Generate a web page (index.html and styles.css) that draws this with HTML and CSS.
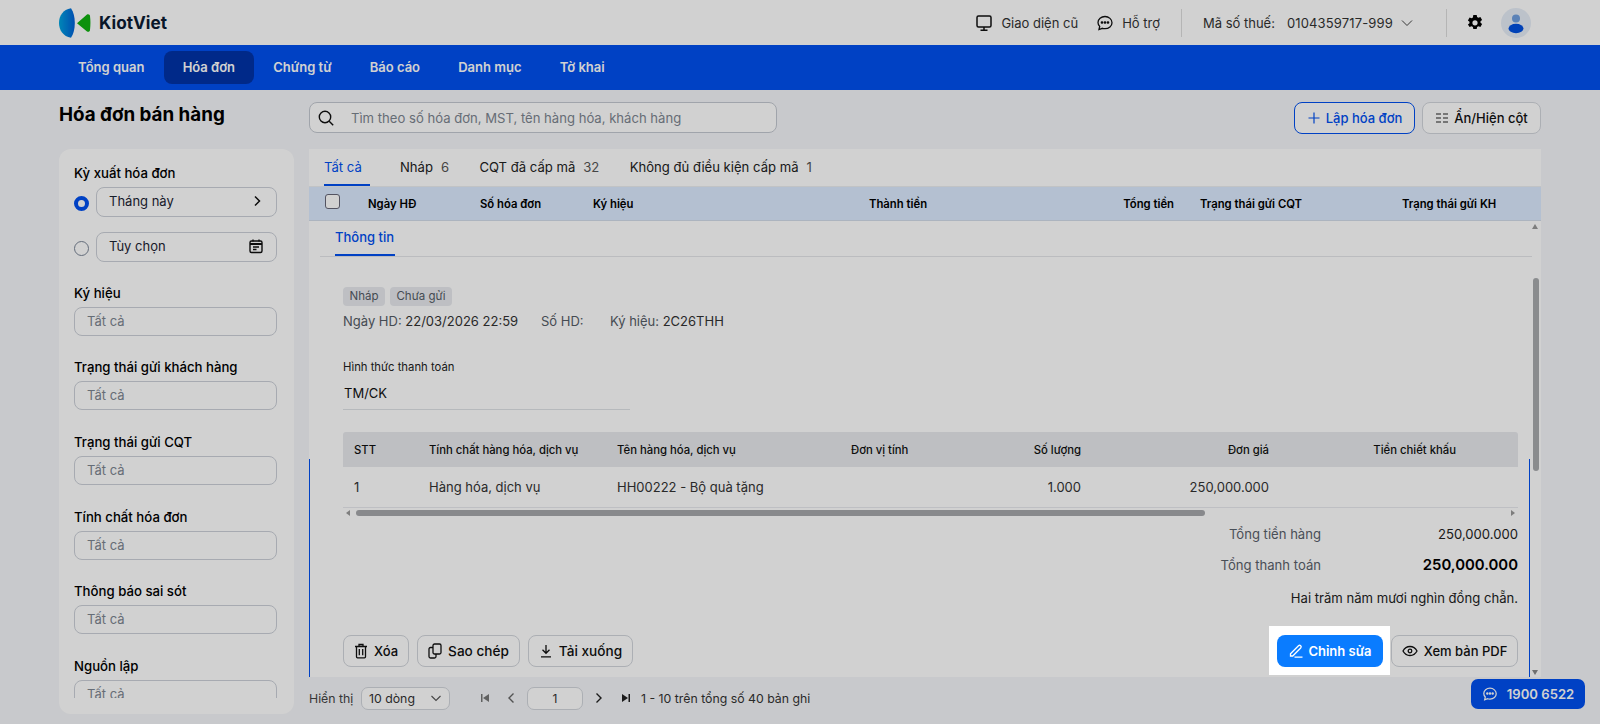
FILE: index.html
```html
<!DOCTYPE html>
<html lang="vi">
<head>
<meta charset="utf-8">
<title>Hóa đơn bán hàng</title>
<link rel="stylesheet" href="styles.css">
</head>
<body>
<header class="topbar">
  <div class="logo">
    <svg width="32" height="30" viewBox="0 0 32 30"><defs><linearGradient id="lg" x1="0" y1="0" x2="1" y2="0"><stop offset="0" stop-color="#00a4e0"/><stop offset="1" stop-color="#0060d8"/></linearGradient></defs><path d="M12 0.300C4 1.500 0 8 0 15s4 13.500 12 14.700C14.500 26 15.800 21 15.800 15S14.500 4 12 0.300Z" fill="url(#lg)"/><path d="M18 15.300L28 6.500c1.500-.8 3 .2 3 1.500 .6 4.500 .6 9 0 14 0 1.500-1.500 2.300-3 1.500L18 15.300Z" fill="#0fb10f"/></svg>
    <span class="logo-text">KiotViet</span>
  </div>
  <div class="top-right">
    <span class="top-link"><svg width="18" height="18" viewBox="0 0 18 18" fill="none" stroke="#111" stroke-width="1.500"><rect x="2" y="2" width="14" height="11" rx="1.500"/><path d="M9 13v3M5.500 16.200h7"/></svg>Giao diện cũ</span>
    <span class="top-link"><svg width="18" height="18" viewBox="0 0 18 18" fill="none" stroke="#111" stroke-width="1.300"><path d="M9 2.500c-3.900 0-7 2.700-7 6 0 1.500.6 2.800 1.700 3.900L3 15.500l3.400-1.200c.8.300 1.700.4 2.600.4 3.900 0 7-2.700 7-6s-3.100-6.200-7-6.200Z"/><circle cx="6" cy="8.500" r=".7" fill="#111"/><circle cx="9" cy="8.500" r=".7" fill="#111"/><circle cx="12" cy="8.500" r=".7" fill="#111"/></svg>Hỗ trợ</span>
    <span class="vsep"></span>
    <span class="tax"><span class="tax-label">Mã số thuế:</span><span class="tax-no">0104359717-999</span><svg width="14" height="14" viewBox="0 0 14 14" fill="none" stroke="#444" stroke-width="1"><path d="M2 4.500l5 5 5-5"/></svg></span>
    <span class="vsep vsep-right"></span>
    <svg class="gear" width="16" height="16" viewBox="0 0 16 16"><path fill="#000" fill-rule="evenodd" d="M6.300 0h3.400l.4 2.100 1.300.7 2-.8 1.700 2.900-1.600 1.400v1.400l1.600 1.400-1.700 2.900-2-.8-1.300.8-.4 2.100H6.300l-.4-2.100-1.300-.8-2 .8L.9 9.600l1.600-1.400V6.800L.9 5.400 2.600 2.500l2 .8 1.300-.7L6.300 0Zm1.700 5.200a2.600 2.600 0 1 0 0 5.200 2.600 2.600 0 0 0 0-5.200Z"/></svg>
    <span class="avatar"><svg width="30" height="30" viewBox="0 0 30 30"><circle cx="15" cy="10.500" r="4" fill="#6f9fe0"/><ellipse cx="15" cy="20.500" rx="7.500" ry="4.700" fill="#0050e0"/></svg></span>
  </div>
</header>
<nav class="mainnav">
  <a class="nav-item">Tổng quan</a>
  <a class="nav-item active">Hóa đơn</a>
  <a class="nav-item">Chứng từ</a>
  <a class="nav-item">Báo cáo</a>
  <a class="nav-item">Danh mục</a>
  <a class="nav-item">Tờ khai</a>
</nav>
<div class="page">
  <aside class="side">
    <h1 class="title">Hóa đơn bán hàng</h1>
    <div class="filters">
      <div class="filters-inner">
        <div class="f-label first">Kỳ xuất hóa đơn</div>
        <div class="radio-row">
          <span class="radio on"></span>
          <span class="field dark">Tháng này<svg width="14" height="14" viewBox="0 0 14 14" fill="none" stroke="#111" stroke-width="1.500"><path d="M5 2.500l4.500 4.500L5 11.500"/></svg></span>
        </div>
        <div class="radio-row second">
          <span class="radio"></span>
          <span class="field dark">Tùy chọn<svg width="16" height="16" viewBox="0 0 16 16" fill="none" stroke="#111" stroke-width="1.400"><rect x="2" y="3" width="12" height="11.500" rx="1.500"/><path d="M2 6h12" stroke-width="2"/><path d="M5 1.500V3.500M11 1.500V3.500M5 9h6M5 11.500h3.500"/></svg></span>
        </div>
        <div class="f-label">Ký hiệu</div><div class="field">Tất cả</div>
        <div class="f-label">Trạng thái gửi khách hàng</div><div class="field">Tất cả</div>
        <div class="f-label">Trạng thái gửi CQT</div><div class="field">Tất cả</div>
        <div class="f-label">Tính chất hóa đơn</div><div class="field">Tất cả</div>
        <div class="f-label">Thông báo sai sót</div><div class="field">Tất cả</div>
        <div class="f-label">Nguồn lập</div><div class="field">Tất cả</div>
      </div>
    </div>
  </aside>
  <main class="content">
    <div class="toolbar">
      <div class="search">
        <svg width="18" height="18" viewBox="0 0 18 18" fill="none" stroke="#111" stroke-width="1.400"><circle cx="8" cy="8" r="5.700"/><path d="M12.200 12.200l4 4"/></svg>
        <span>Tìm theo số hóa đơn, MST, tên hàng hóa, khách hàng</span>
      </div>
      <div class="tool-btns">
        <button class="btn btn-primary-o"><svg width="14" height="14" viewBox="0 0 14 14" stroke="#0050f0" stroke-width="1.200"><path d="M7 1.500v11M1.500 7h11"/></svg>Lập hóa đơn</button>
        <button class="btn btn-cols"><svg width="14" height="14" viewBox="0 0 14 14" stroke="#222" stroke-width="1.100"><path d="M1 3h5M1 7h5M1 11h5M8 3h5M8 7h5M8 11h5"/></svg>Ẩn/Hiện cột</button>
      </div>
    </div>
    <section class="panel">
      <div class="tabs">
        <span class="tab active">Tất cả</span>
        <span class="tab">Nháp<i>6</i></span>
        <span class="tab">CQT đã cấp mã<i>32</i></span>
        <span class="tab">Không đủ điều kiện cấp mã<i>1</i></span>
      </div>
      <div class="thead">
        <span class="cb"></span>
        <span>Ngày HĐ</span><span>Số hóa đơn</span><span>Ký hiệu</span><span>Thành tiền</span><span class="r">Tổng tiền</span><span class="cqt">Trạng thái gửi CQT</span><span>Trạng thái gửi KH</span>
      </div>
      <div class="detail-wrap">
        <span class="edge edge-left"></span>
        <div class="detail">
          <div class="subtabs"><span class="subtab">Thông tin</span></div>
          <div class="tags"><span class="tag">Nháp</span><span class="tag">Chưa gửi</span></div>
          <div class="meta">
            <span><em>Ngày HD:</em> 22/03/2026 22:59</span>
            <span><em>Số HD:</em></span>
            <span><em>Ký hiệu:</em> 2C26THH</span>
          </div>
          <div class="pay-label">Hình thức thanh toán</div>
          <div class="pay-value">TM/CK</div>
          <div class="items">
            <div class="irow ihead"><span>STT</span><span>Tính chất hàng hóa, dịch vụ</span><span>Tên hàng hóa, dịch vụ</span><span>Đơn vị tính</span><span class="r">Số lượng</span><span class="r">Đơn giá</span><span class="r">Tiền chiết khấu</span></div>
            <div class="irow ibody"><span>1</span><span>Hàng hóa, dịch vụ</span><span>HH00222 - Bộ quà tặng</span><span></span><span class="r">1.000</span><span class="r">250,000.000</span><span></span></div>
            <div class="hscroll"><i class="arr arr-l"></i><span class="hthumb"></span><i class="arr arr-r"></i></div>
          </div>
          <div class="totals">
            <div class="t-row"><span class="t-label">Tổng tiền hàng</span><span class="t-val">250,000.000</span></div>
            <div class="t-row grand"><span class="t-label">Tổng thanh toán</span><span class="t-val">250,000.000</span></div>
            <div class="t-words">Hai trăm năm mươi nghìn đồng chẵn.</div>
          </div>
          <div class="actions">
            <button class="btn act"><svg width="14" height="16" viewBox="0 0 14 16" fill="none" stroke="#111" stroke-width="1.300"><path d="M1 3.500h12M5 3.300V1.500h4v1.800M2.500 3.500v10.300c0 .6.400 1 1 1h7c.6 0 1-.4 1-1V3.500M5.300 6v6.300M8.700 6v6.300"/></svg>Xóa</button>
            <button class="btn act act-wide"><svg width="14" height="16" viewBox="0 0 14 16" fill="none" stroke="#111" stroke-width="1.300"><rect x="5" y="1" width="8" height="10" rx="1.500"/><path d="M5 4.500H2.500c-.8 0-1.500.7-1.500 1.500v7.500c0 .8.700 1.500 1.500 1.500h4c.8 0 1.500-.7 1.500-1.500V11"/></svg>Sao chép</button>
            <button class="btn act act-wide"><svg width="14" height="14" viewBox="0 0 14 14" fill="none" stroke="#111" stroke-width="1.300"><path d="M7 1v8M3.500 5.800L7 9.300l3.500-3.500M2 12.800h10"/></svg>Tải xuống</button>
            <span class="grow"></span>
            <span class="spot"><button class="btn btn-edit"><svg width="16" height="16" viewBox="0 0 16 16" fill="none" stroke="#fff" stroke-width="1.300"><path d="M2.500 10.800L10.500 2.800a1.500 1.500 0 0 1 2.200 2.200L4.700 13H2.500v-2.200ZM6.500 14.200h8"/></svg>Chỉnh sửa</button></span>
            <button class="btn act btn-pdf"><svg width="16" height="16" viewBox="0 0 16 16" fill="none" stroke="#111" stroke-width="1.300"><path d="M1 8c1.600-3 4-4.500 7-4.500S13.400 5 15 8c-1.600 3-4 4.500-7 4.500S2.600 11 1 8Z"/><circle cx="8" cy="8" r="1.800"/></svg>Xem bản PDF</button>
          </div>
        </div>
        <span class="edge edge-right"></span>
        <div class="vscroll"><i class="arr arr-u"></i><span class="vthumb"></span><i class="arr arr-d"></i></div>
      </div>
    </section>
    <div class="pager">
      <span class="p-show">Hiển thị</span>
      <span class="p-select">10 dòng<svg width="12" height="12" viewBox="0 0 12 12" fill="none" stroke="#555" stroke-width="1.100"><path d="M1.500 4l4.500 4.500L10.500 4"/></svg></span>
      <svg class="p-first" width="10" height="10" viewBox="0 0 10 10" fill="#777"><path d="M1 1h1.500v8H1zM9 1v8L3 5z"/></svg>
      <svg class="p-prev" width="10" height="12" viewBox="0 0 10 12" fill="none" stroke="#666" stroke-width="1.400"><path d="M7.500 1.500L3 6l4.500 4.500"/></svg>
      <span class="p-input">1</span>
      <svg class="p-next" width="10" height="12" viewBox="0 0 10 12" fill="none" stroke="#222" stroke-width="1.400"><path d="M2.500 1.500L7 6l-4.500 4.500"/></svg>
      <svg class="p-last" width="10" height="10" viewBox="0 0 10 10" fill="#222"><path d="M9 1H7.500v8H9zM1 1v8l6-4z"/></svg>
      <span class="p-total">1 - 10 trên tổng số 40 bản ghi</span>
    </div>
  </main>
</div>
<a class="hotline"><svg width="16" height="16" viewBox="0 0 18 18" fill="none" stroke="#fff" stroke-width="1.400"><path d="M9 2.500c-3.900 0-7 2.700-7 6 0 1.500.6 2.800 1.700 3.900L3 15.500l3.400-1.200c.8.300 1.700.4 2.600.4 3.900 0 7-2.700 7-6s-3.100-6.200-7-6.200Z"/><circle cx="6" cy="8.500" r=".7" fill="#fff"/><circle cx="9" cy="8.500" r=".7" fill="#fff"/><circle cx="12" cy="8.500" r=".7" fill="#fff"/></svg>1900 6522</a>
</body>
</html>
```
FILE: styles.css
```css
* { box-sizing: border-box; }
html, body { margin: 0; height: 724px; overflow: hidden; }
body { background: #f5f6f9; font-family: Inter, "Noto Sans", sans-serif; font-size: 13px; color: #1a1a1a; }
em { font-style: normal; color: #555c66; }
button { font-family: inherit; }

.topbar { height: 45px; background: #fff; display: flex; align-items: center; justify-content: space-between; padding: 0 69px 0 59px; }
.logo { display: flex; align-items: center; }
.logo-text { font-size: 17.200px; font-weight: 700; color: #0b1b33; margin-left: 8px; }
.top-right { display: flex; align-items: center; font-size: 13px; color: #333; }
.top-link { display: flex; align-items: center; gap: 8px; margin-right: 18px; }
.top-link + .top-link { margin-right: 21px; }
.vsep { width: 1px; height: 28px; background: #ddd; }
.tax { display: flex; align-items: center; margin-left: 21px; margin-right: 32px; }
.tax-label { margin-right: 12px; }
.tax-no { margin-right: 7px; letter-spacing: .15px; }
.vsep-right { margin-right: 20px; }
.gear { margin-right: 18px; }
.avatar { width: 30px; height: 30px; border-radius: 50%; background: #e6edf7; display: block; }

.mainnav { height: 45px; background: #0050f0; display: flex; align-items: center; padding-left: 59px; }
.nav-item { color: #fff; font-size: 13px; font-weight: 600; height: 33px; line-height: 33px; padding: 0 19.100px; border-radius: 8px; }
.nav-item.active { background: #0033a8; }

.page { display: flex; padding: 0 59px; height: 634px; }
.side { width: 235px; flex: none; display: flex; flex-direction: column; margin-right: 15px; }
.title { font-size: 18.800px; font-weight: 700; margin: 0; color: #000; height: 59px; line-height: 50px; white-space: nowrap; }
.filters { height: 565px; background: #fff; border-radius: 12px; padding: 15px 17px 16px 15px; }
.filters-inner { height: 100%; overflow: hidden; }
.f-label { font-size: 13.200px; font-weight: 500; color: #000; margin-top: 22.700px; margin-bottom: 5px; height: 18px; line-height: 18px; white-space: nowrap; }
.f-label.first { margin-top: 0; margin-bottom: 4px; height: 19px; line-height: 19px; }
.radio-row { display: flex; align-items: center; gap: 7px; }
.radio-row.second { margin-top: 15px; margin-bottom: -1px; }
.radio { width: 15px; height: 15px; flex: none; border: 1px solid #7a8596; border-radius: 50%; background: #fff; margin-top: 2px; }
.radio.on { border: 4px solid #0050f0; }
.field { height: 29px; border: 1px solid #ccd0d8; border-radius: 8px; padding: 0 12px; color: #7d8590; line-height: 26px; font-size: 13px; background: #fff; }
.field.dark { flex: 1; color: #1d2433; display: flex; align-items: center; justify-content: space-between; height: 30px; padding-bottom: 2px; }

.content { flex: 1; min-width: 0; display: flex; flex-direction: column; }
.toolbar { height: 59px; flex: none; display: flex; justify-content: space-between; align-items: flex-start; padding-top: 12px; }
.search { width: 468px; height: 31px; border: 1px solid #c4c9d1; border-radius: 8px; background: #fff; display: flex; align-items: center; padding-left: 7px; gap: 16px; color: #7d8590; font-size: 13.100px; }
.tool-btns { display: flex; gap: 7px; }
.btn { height: 32px; border: 1px solid #d2d6dc; border-radius: 8px; background: #fff; font-size: 13px; font-weight: 500; color: #111; display: inline-flex; align-items: center; gap: 7px; padding: 0 11px; white-space: nowrap; }
.btn-primary-o { width: 121px; justify-content: center; border-color: #0050f0; color: #0050f0; gap: 5px; padding: 0; }
.btn-cols { width: 119px; justify-content: center; padding: 0; gap: 5px; }

.panel { height: 528px; flex: none; background: #fff; display: flex; flex-direction: column; }
.tabs { height: 38px; flex: none; display: flex; padding-left: 15px; border-bottom: 1px solid #eceef1; font-size: 13.100px; }
.tab { height: 37px; line-height: 36px; padding-right: 30.300px; color: #222; white-space: nowrap; }
.tab i { font-style: normal; color: #555; margin-left: 8px; }
.tab.active { width: 46px; padding: 0; color: #0050f0; border-bottom: 2px solid #0050f0; margin-right: 30px; }
.thead { height: 34px; flex: none; background: #dcebff; border-bottom: 1px solid #d2dcea; display: grid; grid-template-columns: 43px 112px 113px 276px 215px 90px 228px 130px; align-items: center; font-size: 11.300px; font-weight: 600; color: #000; padding-left: 16px; white-space: nowrap; }
.thead .r { text-align: right; }
.thead .cqt { padding-left: 26px; }
.cb { width: 15px; height: 15px; border: 1px solid #667; border-radius: 3px; background: #fff; margin-top: -4px; }

.detail-wrap { flex: 1; min-height: 0; display: flex; position: relative; }
.edge { position: absolute; top: 238px; bottom: 0; width: 1px; background: #0050f0; }
.edge-left { left: 0; }
.edge-right { right: 11px; }
.detail { flex: 1; min-width: 0; padding-left: 11px; display: flex; flex-direction: column; }
.subtabs { height: 36px; flex: none; border-bottom: 1px solid #e4e6ea; padding-left: 15px; margin-right: -3px; }
.subtab { display: inline-block; height: 35px; line-height: 32px; width: 60px; color: #0050f0; font-size: 13px; font-weight: 500; border-bottom: 2px solid #0050f0; white-space: nowrap; }
.tags { margin: 30px 0 0 23px; display: flex; gap: 5px; height: 19px; }
.tag { background: #e8eaee; color: #555c66; font-size: 11.500px; height: 19px; line-height: 19px; padding: 0 6.500px; border-radius: 4px; }
.meta { margin: 6px 0 0 23px; display: flex; font-size: 13px; color: #333; height: 18px; line-height: 18px; white-space: nowrap; }
.meta span:nth-child(1) { width: 198px; }
.meta span:nth-child(2) { width: 69px; }
.pay-label { margin: 29px 0 0 23px; height: 16px; line-height: 16px; font-size: 11.300px; color: #222; }
.pay-value { margin: 0 0 0 23px; width: 287px; height: 35px; line-height: 36px; padding-left: 1px; border-bottom: 1px solid #dfe2e6; font-size: 13px; color: #111; }
.items { margin: 22px 11px 0 23px; flex: none; }
.irow { display: grid; grid-template-columns: 75px 188px 234px 134px 96px 188px 187px 62px; padding-left: 11px; align-items: center; white-space: nowrap; }
.irow .r { text-align: right; }
.ihead { height: 35px; background: #e8eaed; font-weight: 500; color: #111; border-radius: 3px 3px 0 0; font-size: 11.300px; }
.ibody { height: 41px; border-bottom: 1px solid #e8eaee; font-size: 13px; color: #333; }
.hscroll { height: 10px; display: flex; align-items: center; }
.hthumb { width: 849px; height: 6px; margin-left: 6px; border-radius: 3px; background: #a6a8ab; }
.arr { display: block; width: 0; height: 0; border-style: solid; border-color: transparent; flex: none; }
.arr-l { border-width: 3.500px 4px 3.500px 0; border-right-color: #9a9a9a; margin-left: 3px; }
.arr-r { border-width: 3.500px 0 3.500px 4px; border-left-color: #999; margin-left: 306px; }
.totals { margin: 7px 11px 0 0; flex: none; }
.t-row { display: flex; justify-content: flex-end; height: 18px; line-height: 18px; font-size: 13.100px; }
.t-label { color: #5a616b; }
.t-val { width: 197px; text-align: right; color: #222; }
.grand { margin-top: 13px; }
.grand .t-val { font-size: 14.900px; font-weight: 600; color: #000; }
.t-words { margin-top: 15px; text-align: right; font-size: 13.100px; color: #222; height: 18px; line-height: 18px; }
.actions { display: flex; align-items: flex-start; gap: 8px; margin: 28px 11px 0 23px; height: 32px; }
.grow { flex: 1; }
.act { padding: 0 10px; gap: 6px; }
.act-wide { font-size: 13.600px; }
.act svg { flex: none; }
.btn-pdf { width: 127px; justify-content: center; }
.spot { background: #fff; padding: 9px 7px 8px 8px; margin: -9px -7px -8px 0; position: relative; z-index: 20; box-shadow: 0 0 0 3000px rgba(0, 0, 0, .18); display: block; height: 49px; width: 121px; }
.btn-edit { background: #0a7cff; border: 0; color: #fff; width: 106px; justify-content: center; gap: 4px; padding: 0; font-weight: 600; }
.vscroll { width: 12px; flex: none; position: relative; }
.vthumb { position: absolute; top: 57px; left: 4px; width: 6px; height: 193px; border-radius: 3px; background: #a9abae; }
.arr-u { position: absolute; top: 3px; left: 3px; border-width: 0 3.500px 5px; border-bottom-color: #999; }
.arr-d { position: absolute; bottom: 2px; left: 3px; border-width: 5px 3.500px 0; border-top-color: #888; }

.pager { height: 42px; display: flex; align-items: center; font-size: 12.300px; color: #333; }
.p-show { width: 52px; color: #444; white-space: nowrap; }
.p-select { width: 89px; height: 23px; border: 1px solid #d2d6dc; border-radius: 7px; background: #fff; display: flex; align-items: center; justify-content: space-between; padding: 0 7px; }
.p-first { margin-left: 30px; }
.p-prev { margin-left: 16px; }
.p-input { margin-left: 11px; width: 56px; height: 23px; line-height: 22px; border: 1px solid #d2d6dc; border-radius: 7px; background: #fff; text-align: center; font-size: 12px; color: #333; }
.p-next { margin-left: 11px; }
.p-last { margin-left: 17px; }
.p-total { margin-left: 10px; white-space: nowrap; }

.hotline { position: absolute; right: 15px; bottom: 15px; width: 114px; height: 30px; border-radius: 7px; background: #0050f0; color: #fff; display: flex; align-items: center; justify-content: center; gap: 9px; font-weight: 600; font-size: 13.100px; }
```
